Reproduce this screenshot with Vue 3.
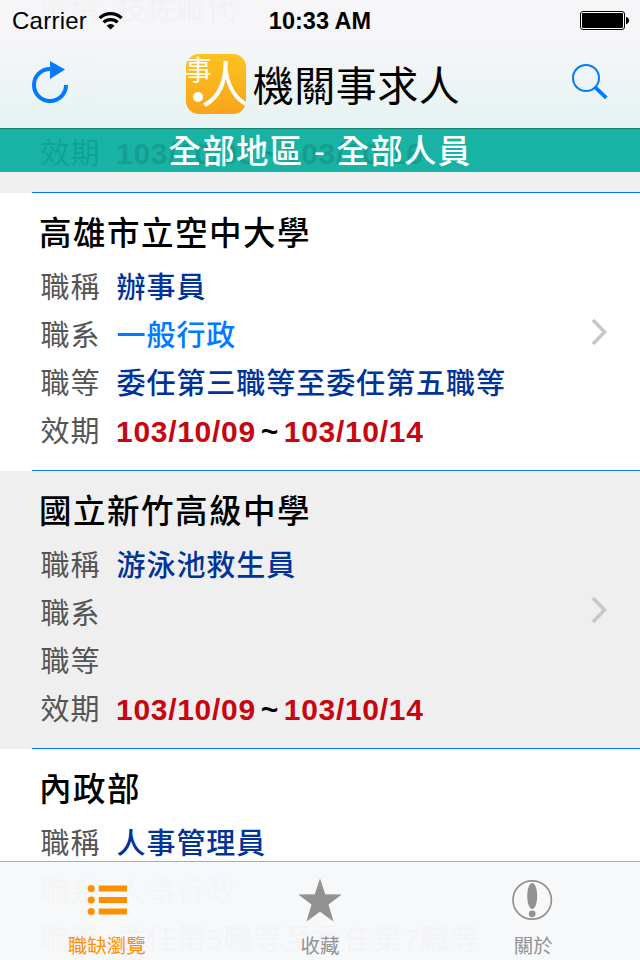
<script setup>
const jobs = [
    { org: "國立高級中學", title: "技佐職代", series: "", grade: "", from: "103/10/09", to: "103/10/16" },
    { org: "高雄市立空中大學", title: "辦事員", series: "一般行政", grade: "委任第三職等至委任第五職等", from: "103/10/09", to: "103/10/14" },
    { org: "國立新竹高級中學", title: "游泳池救生員", series: "", grade: "", from: "103/10/09", to: "103/10/14" },
    { org: "內政部", title: "人事管理員", series: "人事行政", grade: "委任第5職等至委任第7職等", from: "103/10/09", to: "103/10/14" },
];
</script>

<template>
    <div class="screen">
        <ul class="jobs">
            <li v-for="job in jobs" :key="job.org" class="job">
                <h2>{{ job.org }}</h2>
                <dl>
                    <dt>職稱</dt>
                    <dd>{{ job.title }}</dd>
                    <dt>職系</dt>
                    <dd class="series">{{ job.series }}</dd>
                    <dt>職等</dt>
                    <dd>{{ job.grade }}</dd>
                    <dt>效期</dt>
                    <dd class="dates">
                        <b>{{ job.from }}</b><i>~</i><b>{{ job.to }}</b>
                    </dd>
                </dl>
                <svg class="chevron" width="18" height="28" viewBox="0 0 18 28">
                    <path d="M2 2 13.5 14 2 26" fill="none" stroke="#c7c7cc" stroke-width="3.6" />
                </svg>
            </li>
        </ul>

        <header class="top">
            <div class="status">
                <div class="carrier">
                    <span>Carrier</span>
                    <svg width="26" height="20" viewBox="0 0 26 20">
                        <g fill="none" stroke="#000" stroke-width="3.2">
                            <path d="M1.6 7.1a15.8 15.8 0 0 1 22 0" />
                            <path d="M5.6 11.4a10 10 0 0 1 14 0" />
                        </g>
                        <path d="M8.6 14.7a5.8 5.8 0 0 1 8 0L12.6 18.5z" />
                    </svg>
                </div>
                <span class="time">10:33 AM</span>
                <svg class="battery" width="50" height="20" viewBox="0 0 50 20">
                    <rect x=".5" y=".5" width="44" height="18" rx="2.5" fill="#fff" stroke="#000" />
                    <rect x="2" y="2" width="41" height="15" rx="1" />
                    <path d="M46 6h.5c1.5.5 2.5 1.8 2.5 3.5s-1 3-2.5 3.5H46z" />
                </svg>
            </div>
            <nav class="navbar">
                <svg class="refresh" width="40" height="46" viewBox="0 0 40 46">
                    <path d="M20 9A16 16 0 1 0 36 25" fill="none" stroke="#007aff" stroke-width="4" />
                    <path d="M20 1v18l15-9.5z" fill="#007aff" />
                </svg>
                <div class="brand">
                    <span class="logo">
                        <span class="small">事</span>
                        <span class="dot"></span>
                        <span class="big">人</span>
                    </span>
                    <h1>機關事求人</h1>
                </div>
                <svg width="38" height="38" viewBox="0 0 38 38">
                    <circle cx="15" cy="15" r="13" fill="none" stroke="#007aff" stroke-width="2" />
                    <path d="m24.3 24.3 11 10.5" stroke="#007aff" stroke-width="3.8" />
                </svg>
            </nav>
            <div class="filter">全部地區 - 全部人員</div>
        </header>

        <footer class="tabs">
            <a class="tab active">
                <svg width="44" height="44" viewBox="0 0 44 44" fill="currentColor">
                    <circle cx="6.2" cy="10.5" r="3.6" />
                    <circle cx="6.2" cy="22" r="3.6" />
                    <circle cx="6.2" cy="33.5" r="3.6" />
                    <path d="M13.8 7.5h28.2v6H13.8zM13.8 19h28.2v6H13.8zM13.8 30.500h28.2v6H13.8z" />
                </svg>
                職缺瀏覽
            </a>
            <a class="tab">
                <svg width="44" height="44" viewBox="0 0 44 44" fill="currentColor">
                    <path d="m22 .5 5.2 15.7 16.5.2-13.2 10L35.500 43.500 22 33.8 8.500 43.500l5-17.1-13.2-10 16.5-.2z" />
                </svg>
                收藏
            </a>
            <a class="tab">
                <svg width="44" height="44" viewBox="0 0 44 44" fill="currentColor">
                    <circle cx="21.2" cy="22" r="19.2" fill="none" stroke="currentColor" stroke-width="1.7" />
                    <ellipse cx="21.2" cy="18" rx="5" ry="13" />
                    <circle cx="21.2" cy="35.8" r="3.4" />
                </svg>
                關於
            </a>
        </footer>
    </div>
</template>

<style>
body {
    margin: 0;
}
</style>

<style scoped>
.screen {
    position: relative;
    width: 640px;
    height: 960px;
    overflow: hidden;
    background: #fff;
    font-family: "Liberation Sans", "Noto Sans CJK TC", sans-serif;
}

.jobs {
    list-style: none;
    margin: -85px 0 0;
    padding: 0;
}

.job {
    display: flow-root;
    position: relative;
    box-sizing: border-box;
    height: 278px;
    padding: 20px 0 0 41px;
    background: #fff;

    &:nth-child(odd) {
        background: #efefef;
    }

    /* inset hairline between the rows */
    &::after {
        content: "";
        position: absolute;
        left: 32px;
        right: 0;
        bottom: 0;
        height: 1px;
        background: #007aff;
    }
}

h2 {
    margin: 0 0 9px -2px;
    font-size: 32.5px;
    line-height: 42px;
    font-weight: 500;
    letter-spacing: 1.5px;
}

dl {
    display: grid;
    grid-template-columns: 76px 1fr;
    grid-auto-rows: 48px;
    margin: 0 0 0 -0.5px;
    line-height: 49px;
    font-size: 29px;
    letter-spacing: 0.95px;
}

dt {
    color: #555;
}

dd {
    margin: 0;
    color: #003399;
    font-weight: 500;
    white-space: nowrap;

    &.series {
        color: #007aff;
    }
}

.dates {
    display: flex;
    margin: -1px 0 0 -0.5px;
    font-size: 30px;
    letter-spacing: 0.7px;

    b {
        color: #c7060f;
    }

    i {
        width: 28px;
        text-align: center;
        font-style: normal;
        font-weight: 700;
        color: #000;
    }
}

.chevron {
    position: absolute;
    right: 31px;
    top: 125px;
}

.top {
    position: absolute;
    inset: 0 0 auto;
}

.status {
    display: grid;
    grid-template-columns: 1fr auto 1fr;
    align-items: center;
    box-sizing: border-box;
    height: 40px;
    padding: 0 10px 0 12px;
    font-size: 24px;
    background: rgba(246, 246, 248, 0.98);
}

.carrier {
    display: flex;
    align-items: center;
    gap: 11px;
    padding-top: 2px;
    letter-spacing: 0.25px;
}

.time {
    margin-right: 2px;
    padding-top: 2px;
    font-weight: 700;
    font-size: 23.5px;
}

.battery {
    justify-self: end;
    margin-top: 2px;
}

.navbar {
    display: flex;
    align-items: center;
    justify-content: space-between;
    box-sizing: border-box;
    height: 89px;
    padding: 0 31px 4px 30px;
    border-bottom: 1px solid #16806f;
    background: linear-gradient(rgba(246, 246, 248, 0.99), rgba(230, 243, 242, 0.99));
}

.refresh {
    margin-top: 1px;
}

.brand {
    display: flex;
    align-items: center;
    gap: 7px;
    margin: 4px 0 0 5px;
}

.logo {
    position: relative;
    width: 60px;
    height: 60px;
    border-radius: 13px;
    overflow: hidden;
    background: linear-gradient(#fdc221, #f8a51b);
    color: #fff;

    .small,
    .big,
    .dot {
        position: absolute;
        line-height: 1;
    }

    .small {
        left: -1px;
        top: 4px;
        font-size: 27px;
    }

    .big {
        left: 15px;
        top: 7px;
        font-size: 50px;
        font-weight: 400;
    }

    .dot {
        left: 7px;
        top: 38px;
        width: 10px;
        height: 10px;
        border-radius: 50%;
        background: #fff;
    }
}

h1 {
    margin: 5px 0 0;
    font-size: 41px;
    line-height: 60px;
    font-weight: 400;
    letter-spacing: 0.5px;
}

.filter {
    height: 43px;
    line-height: 46px;
    text-align: center;
    font-size: 32.5px;
    font-weight: 500;
    letter-spacing: 1.3px;
    color: #fff;
    background: rgba(3, 173, 157, 0.91);
}

.tabs {
    position: absolute;
    inset: auto 0 0;
    display: grid;
    grid-template-columns: repeat(3, 1fr);
    box-sizing: border-box;
    height: 99px;
    border-top: 1px solid #aaa;
    background: rgba(247, 248, 249, 0.98);
}

.tab {
    display: flex;
    flex-direction: column;
    align-items: center;
    padding-top: 16px;
    font-size: 19.5px;
    line-height: 49px;
    color: #929292;

    &.active {
        color: #ff8f00;
    }
}
</style>
